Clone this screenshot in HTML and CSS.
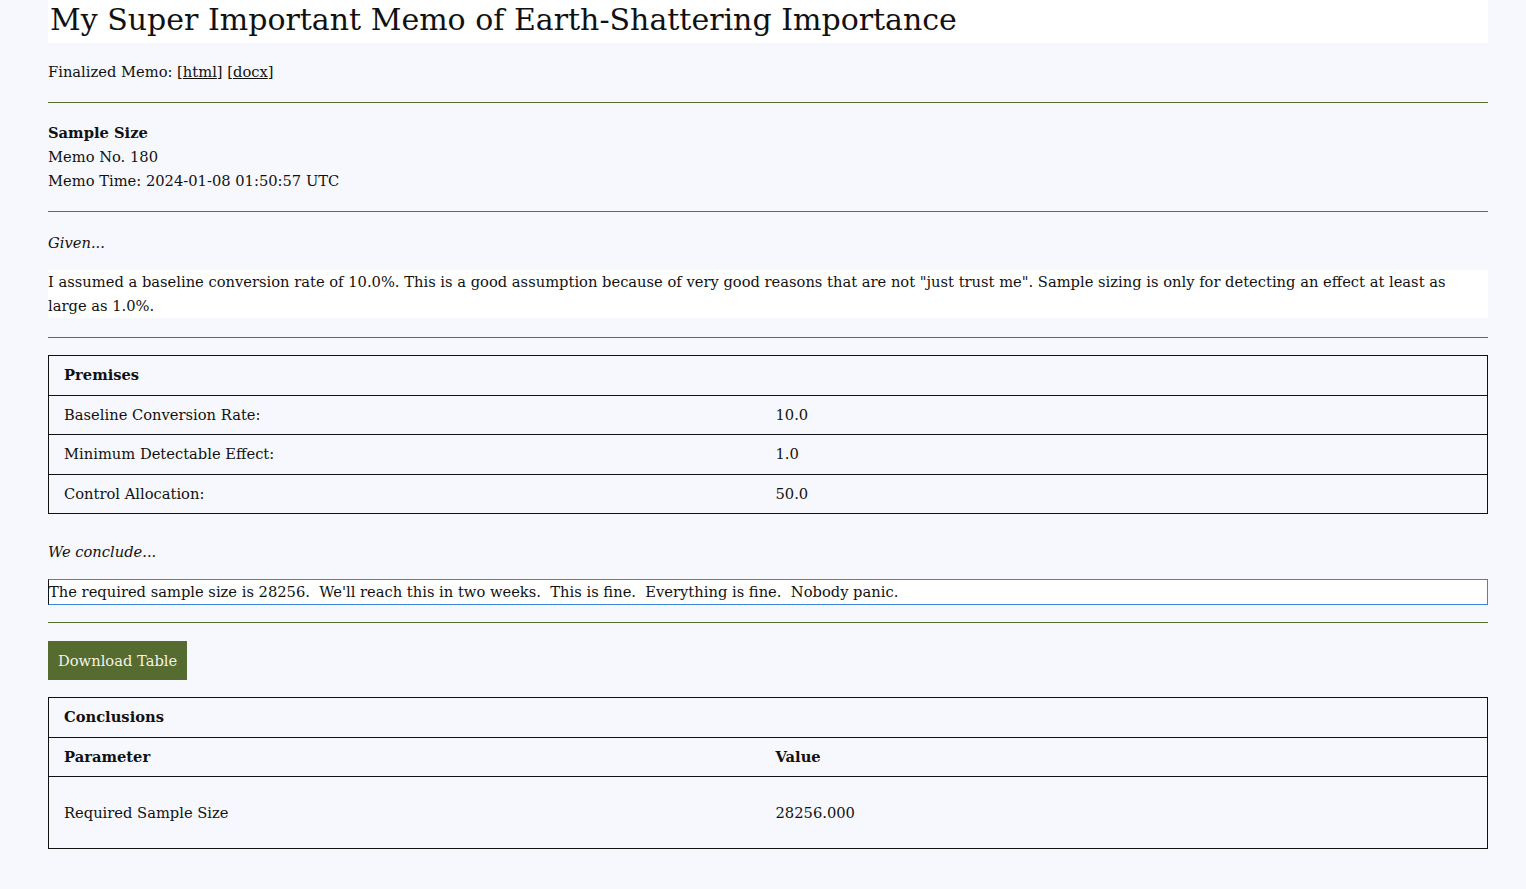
FILE: index.html
```html
<!DOCTYPE html>
<html lang="en">
<head>
<meta charset="utf-8">
<title>Memo</title>
<link rel="stylesheet" href="styles.css">
</head>
<body>
<main class="page">
  <h1 class="title">My Super Important Memo of Earth-Shattering Importance</h1>
  <p class="line finalized">Finalized Memo: [<a href="#">html</a>] [<a href="#">docx</a>]</p>
  <hr class="rule rule-green rule-first">
  <div class="meta">
    <div class="line bold">Sample Size</div>
    <div class="line">Memo No. 180</div>
    <div class="line">Memo Time: 2024-01-08 01:50:57 UTC</div>
  </div>
  <hr class="rule rule-grey rule-meta">
  <p class="line italic given">Given...</p>
  <p class="assumption">I assumed a baseline conversion rate of 10.0%. This is a good assumption because of very good reasons that are not "just trust me". Sample sizing is only for detecting an effect at least as large as 1.0%.</p>
  <hr class="rule rule-grey rule-assume">
  <table class="data premises">
    <colgroup><col class="c1"><col></colgroup>
    <tr><th colspan="2">Premises</th></tr>
    <tr><td>Baseline Conversion Rate:</td><td>10.0</td></tr>
    <tr><td>Minimum Detectable Effect:</td><td>1.0</td></tr>
    <tr><td>Control Allocation:</td><td>50.0</td></tr>
  </table>
  <p class="line italic conclude">We conclude...</p>
  <div class="result">The required sample size is 28256.&nbsp; We'll reach this in two weeks.&nbsp; This is fine.&nbsp; Everything is fine.&nbsp; Nobody panic.</div>
  <hr class="rule rule-green rule-result">
  <button class="download" type="button">Download Table</button>
  <table class="data conclusions">
    <colgroup><col class="c1"><col></colgroup>
    <tr><th colspan="2">Conclusions</th></tr>
    <tr><th>Parameter</th><th>Value</th></tr>
    <tr class="tall"><td>Required Sample Size</td><td>28256.000</td></tr>
  </table>
</main>
</body>
</html>
```

FILE: styles.css
```css
html, body {
  margin: 0;
  padding: 0;
  background: #f7f8fd;
}
body {
  font-family: "DejaVu Serif", "Liberation Serif", serif;
  font-size: 14.7px;
  line-height: 24px;
  color: #111;
}
.page {
  margin: 0 38px 0 48px;
  padding-bottom: 40px;
}
.title {
  margin: 0;
  height: 43px;
  line-height: 40px;
  padding-left: 2px;
  background: #fff;
  font-weight: normal;
  font-size: 30px;
  color: #111;
}
.line { margin: 0; }
.bold { font-weight: bold; }
.italic { font-style: italic; }
.finalized { margin-top: 17px; }
.finalized a { color: #111; text-decoration: underline; }
.rule {
  margin: 0;
  border: 0;
  height: 1px;
}
.rule-green { background: #556b2f; }
.rule-grey { background: #5f6b55; }
.rule-first { margin-top: 18px; }
.meta { margin-top: 18px; }
.rule-meta { margin-top: 18px; }
.given { margin-top: 19px; }
.assumption {
  margin: 15px 0 0;
  background: #fff;
}
.rule-assume { margin-top: 19px; }
.data {
  width: 100%;
  border-collapse: collapse;
  table-layout: fixed;
}
.data col.c1 { width: 712px; }
.data th, .data td {
  border: 1px solid #111;
  border-left: 0;
  border-right: 0;
  padding: 7.25px 15px;
  text-align: left;
  vertical-align: middle;
  font-weight: normal;
}
.data th { font-weight: bold; }
.data tr > :first-child { border-left: 1px solid #111; }
.data tr > :last-child { border-right: 1px solid #111; }
.premises { margin-top: 17px; }
.conclude { margin-top: 26px; }
.result {
  margin-top: 15px;
  background: #fff;
  border: 1px solid #3b84e2;
  border-left-color: #111;
  line-height: 24px;
}
.rule-result { margin-top: 17px; }
.download {
  display: block;
  margin-top: 18px;
  height: 39px;
  padding: 0 10px;
  border: 0;
  background: #556b2f;
  color: #f2f2e8;
  font-family: inherit;
  font-size: 14.7px;
}
.conclusions { margin-top: 17px; }
.conclusions tr.tall td { height: 72px; padding-top: 0; padding-bottom: 0; box-sizing: border-box; }
```
